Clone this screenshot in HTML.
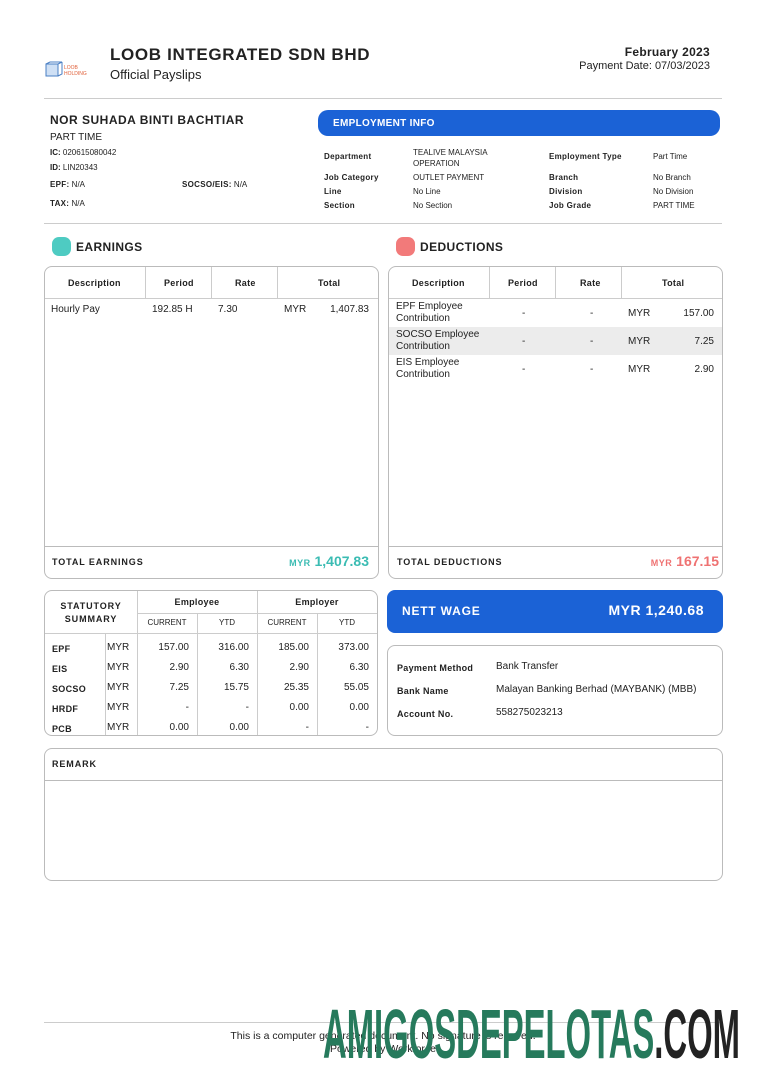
<!DOCTYPE html>
<html><head><meta charset="utf-8"><style>
*{margin:0;padding:0;box-sizing:border-box}
body{width:766px;height:1083px;background:#fff;position:relative;font-family:"Liberation Sans",sans-serif;color:#222;overflow:hidden}
.a{position:absolute;white-space:nowrap}
.n{font-family:"Liberation Sans Narrow","Liberation Sans",sans-serif;font-weight:bold;letter-spacing:.3px}
.box{position:absolute;border:1px solid #bbb;border-radius:8px}
.vl{position:absolute;width:1px;background:#ccc}
.hl{position:absolute;height:1px;background:#ccc}
.s9{font-size:9px}.s10{font-size:10px}.s11{font-size:11px}.s8{font-size:8px}
.r{text-align:right}
</style></head><body>
<svg class="a" style="left:45px;top:61px" width="46" height="18" viewBox="0 0 46 18"><rect x="1" y="3" width="12" height="12" fill="#cfe0f5" stroke="#4a7fc4" stroke-width="1"/><path d="M1 3 L5 1 L17 1 L13 3 M13 15 L17 13 L17 1" fill="none" stroke="#4a7fc4"/><text x="19" y="8" font-size="5" fill="#e0603a" font-family="Liberation Sans">LOOB</text><text x="19" y="14" font-size="5" fill="#e0603a" font-family="Liberation Sans">HOLDING</text></svg>
<div class="a" style="left:110px;top:45px;font-size:17px;font-weight:bold;letter-spacing:0.65px">LOOB INTEGRATED SDN BHD</div>
<div class="a" style="left:110px;top:67px;font-size:13px">Official Payslips</div>
<div class="a r" style="right:56px;top:45px;font-size:12px;font-weight:bold;letter-spacing:.3px">February 2023</div>
<div class="a r" style="right:56px;top:60px;font-size:11px">Payment Date: 07/03/2023</div>
<div class="hl" style="left:44px;top:98px;width:678px"></div>

<div class="a n" style="left:50px;top:113px;font-size:12px;letter-spacing:.5px">NOR SUHADA BINTI BACHTIAR</div>
<div class="a s10" style="left:50px;top:132px">PART TIME</div>
<div class="a s8" style="left:50px;top:148px"><b>IC:</b> 020615080042</div>
<div class="a s8" style="left:50px;top:163px"><b>ID:</b> LIN20343</div>
<div class="a s8" style="left:50px;top:180px"><span class="n">EPF:</span> N/A</div>
<div class="a s8" style="left:182px;top:180px"><span class="n">SOCSO/EIS:</span> N/A</div>
<div class="a s8" style="left:50px;top:199px"><span class="n">TAX:</span> N/A</div>

<div class="a" style="left:318px;top:110px;width:402px;height:26px;background:#1b62d6;border-radius:10px"></div>
<div class="a n" style="left:333px;top:118px;font-size:10px;color:#fff;letter-spacing:.3px">EMPLOYMENT INFO</div>
<div class="a n s8" style="left:324px;top:152px">Department</div>
<div class="a s8" style="left:413px;top:147px;line-height:11px">TEALIVE MALAYSIA<br>OPERATION</div>
<div class="a n s8" style="left:549px;top:152px">Employment Type</div>
<div class="a s8" style="left:653px;top:152px">Part Time</div>
<div class="a n s8" style="left:324px;top:173px">Job Category</div>
<div class="a s8" style="left:413px;top:173px">OUTLET PAYMENT</div>
<div class="a n s8" style="left:549px;top:173px">Branch</div>
<div class="a s8" style="left:653px;top:173px">No Branch</div>
<div class="a n s8" style="left:324px;top:187px">Line</div>
<div class="a s8" style="left:413px;top:187px">No Line</div>
<div class="a n s8" style="left:549px;top:187px">Division</div>
<div class="a s8" style="left:653px;top:187px">No Division</div>
<div class="a n s8" style="left:324px;top:201px">Section</div>
<div class="a s8" style="left:413px;top:201px">No Section</div>
<div class="a n s8" style="left:549px;top:201px">Job Grade</div>
<div class="a s8" style="left:653px;top:201px">PART TIME</div>
<div class="hl" style="left:44px;top:223px;width:678px"></div>

<div class="a" style="left:52px;top:237px;width:19px;height:19px;background:#4ecbc2;border-radius:7px"></div>
<div class="a n" style="left:76px;top:240px;font-size:12px;letter-spacing:.4px">EARNINGS</div>
<div class="a" style="left:396px;top:237px;width:19px;height:19px;background:#f27a7a;border-radius:7px"></div>
<div class="a n" style="left:420px;top:240px;font-size:12px;letter-spacing:.4px">DEDUCTIONS</div>

<div class="box" style="left:44px;top:266px;width:335px;height:313px"></div>
<div class="hl" style="left:45px;top:298px;width:333px"></div>
<div class="vl" style="left:145px;top:267px;height:31px"></div>
<div class="vl" style="left:211px;top:267px;height:31px"></div>
<div class="vl" style="left:277px;top:267px;height:31px"></div>
<div class="a n s9" style="left:68px;top:278px">Description</div>
<div class="a n s9" style="left:164px;top:278px">Period</div>
<div class="a n s9" style="left:235px;top:278px">Rate</div>
<div class="a n s9" style="left:318px;top:278px">Total</div>
<div class="a s10" style="left:51px;top:304px">Hourly Pay</div>
<div class="a s10" style="left:152px;top:304px">192.85 H</div>
<div class="a s10" style="left:218px;top:304px">7.30</div>
<div class="a s10" style="left:284px;top:304px">MYR</div>
<div class="a s10 r" style="right:397px;top:304px">1,407.83</div>
<div class="hl" style="left:45px;top:546px;width:333px;background:#bbb"></div>
<div class="a n s9" style="left:52px;top:557px;letter-spacing:.9px">TOTAL EARNINGS</div>
<div class="a r" style="right:397px;top:553px;color:#3bbcb3;font-weight:bold;font-size:14px"><span style="font-size:9px;letter-spacing:.5px">MYR</span> 1,407.83</div>

<div class="box" style="left:388px;top:266px;width:335px;height:313px"></div>
<div class="hl" style="left:389px;top:298px;width:333px"></div>
<div class="vl" style="left:489px;top:267px;height:31px"></div>
<div class="vl" style="left:555px;top:267px;height:31px"></div>
<div class="vl" style="left:621px;top:267px;height:31px"></div>
<div class="a n s9" style="left:412px;top:278px">Description</div>
<div class="a n s9" style="left:508px;top:278px">Period</div>
<div class="a n s9" style="left:580px;top:278px">Rate</div>
<div class="a n s9" style="left:662px;top:278px">Total</div>
<div class="a" style="left:389px;top:327px;width:333px;height:28px;background:#ececec"></div>
<div class="a s10" style="left:396px;top:301px;line-height:12px">EPF Employee<br>Contribution</div>
<div class="a s10" style="left:396px;top:329px;line-height:12px">SOCSO Employee<br>Contribution</div>
<div class="a s10" style="left:396px;top:357px;line-height:12px">EIS Employee<br>Contribution</div>
<div class="a s10" style="left:522px;top:308px">-</div><div class="a s10" style="left:590px;top:308px">-</div>
<div class="a s10" style="left:522px;top:336px">-</div><div class="a s10" style="left:590px;top:336px">-</div>
<div class="a s10" style="left:522px;top:364px">-</div><div class="a s10" style="left:590px;top:364px">-</div>
<div class="a s10" style="left:628px;top:308px">MYR</div><div class="a s10 r" style="right:52px;top:308px">157.00</div>
<div class="a s10" style="left:628px;top:336px">MYR</div><div class="a s10 r" style="right:52px;top:336px">7.25</div>
<div class="a s10" style="left:628px;top:364px">MYR</div><div class="a s10 r" style="right:52px;top:364px">2.90</div>
<div class="hl" style="left:389px;top:546px;width:333px;background:#bbb"></div>
<div class="a n s9" style="left:397px;top:557px;letter-spacing:.9px">TOTAL DEDUCTIONS</div>
<div class="a r" style="right:47px;top:553px;color:#ef7272;font-weight:bold;font-size:14px"><span style="font-size:9px;letter-spacing:.5px">MYR</span> 167.15</div>

<div class="box" style="left:44px;top:590px;width:334px;height:146px"></div>
<div class="vl" style="left:137px;top:591px;height:144px"></div>
<div class="vl" style="left:257px;top:591px;height:144px"></div>
<div class="vl" style="left:197px;top:613px;height:122px"></div>
<div class="vl" style="left:317px;top:613px;height:122px"></div>
<div class="vl" style="left:105px;top:633px;height:102px"></div>
<div class="hl" style="left:137px;top:613px;width:240px"></div>
<div class="hl" style="left:45px;top:633px;width:332px"></div>
<div class="a n s9" style="left:45px;top:600px;width:92px;text-align:center;line-height:13px;letter-spacing:.9px">STATUTORY<br>SUMMARY</div>
<div class="a n s9" style="left:137px;top:597px;width:120px;text-align:center">Employee</div>
<div class="a n s9" style="left:257px;top:597px;width:120px;text-align:center">Employer</div>
<div class="a s8" style="left:137px;top:618px;width:60px;text-align:center">CURRENT</div>
<div class="a s8" style="left:197px;top:618px;width:60px;text-align:center">YTD</div>
<div class="a s8" style="left:257px;top:618px;width:60px;text-align:center">CURRENT</div>
<div class="a s8" style="left:317px;top:618px;width:60px;text-align:center">YTD</div>
<div class="a n s9" style="left:52px;top:639px;line-height:20px">EPF<br>EIS<br>SOCSO<br>HRDF<br>PCB</div>
<div class="a s10" style="left:107px;top:638px;line-height:20px">MYR<br>MYR<br>MYR<br>MYR<br>MYR</div>
<div class="a s10 r" style="left:137px;width:52px;top:638px;line-height:20px">157.00<br>2.90<br>7.25<br>-<br>0.00</div>
<div class="a s10 r" style="left:197px;width:52px;top:638px;line-height:20px">316.00<br>6.30<br>15.75<br>-<br>0.00</div>
<div class="a s10 r" style="left:257px;width:52px;top:638px;line-height:20px">185.00<br>2.90<br>25.35<br>0.00<br>-</div>
<div class="a s10 r" style="left:317px;width:52px;top:638px;line-height:20px">373.00<br>6.30<br>55.05<br>0.00<br>-</div>

<div class="a" style="left:387px;top:590px;width:336px;height:43px;background:#1b62d6;border-radius:8px"></div>
<div class="a n" style="left:402px;top:604px;font-size:12px;color:#fff;letter-spacing:.8px">NETT WAGE</div>
<div class="a r" style="right:62px;top:602px;font-size:14px;color:#fff;font-weight:bold;letter-spacing:.5px">MYR 1,240.68</div>
<div class="box" style="left:387px;top:645px;width:336px;height:91px"></div>
<div class="a n s9" style="left:397px;top:663px">Payment Method</div>
<div class="a s10" style="left:496px;top:661px">Bank Transfer</div>
<div class="a n s9" style="left:397px;top:686px">Bank Name</div>
<div class="a s10" style="left:496px;top:684px">Malayan Banking Berhad (MAYBANK) (MBB)</div>
<div class="a n s9" style="left:397px;top:709px">Account No.</div>
<div class="a s10" style="left:496px;top:707px">558275023213</div>

<div class="box" style="left:44px;top:748px;width:679px;height:133px"></div>
<div class="hl" style="left:45px;top:780px;width:677px;background:#bbb"></div>
<div class="a n s9" style="left:52px;top:759px;letter-spacing:.9px">REMARK</div>

<div class="hl" style="left:44px;top:1022px;width:678px"></div>
<div class="a" style="left:0;width:766px;top:1030px;text-align:center;font-size:10.5px;line-height:13px">This is a computer generated document. No signature is required.<br>Powered by Workforce</div>
<svg class="a" style="left:323px;top:1000px" width="420" height="62"><text x="0" y="58" textLength="417" lengthAdjust="spacingAndGlyphs" font-family="Liberation Sans Narrow,Liberation Sans,sans-serif" font-weight="bold" font-size="70" fill="#267a5c">AMIGOSDEPELOTAS<tspan fill="#222">.COM</tspan></text></svg>
</body></html>
